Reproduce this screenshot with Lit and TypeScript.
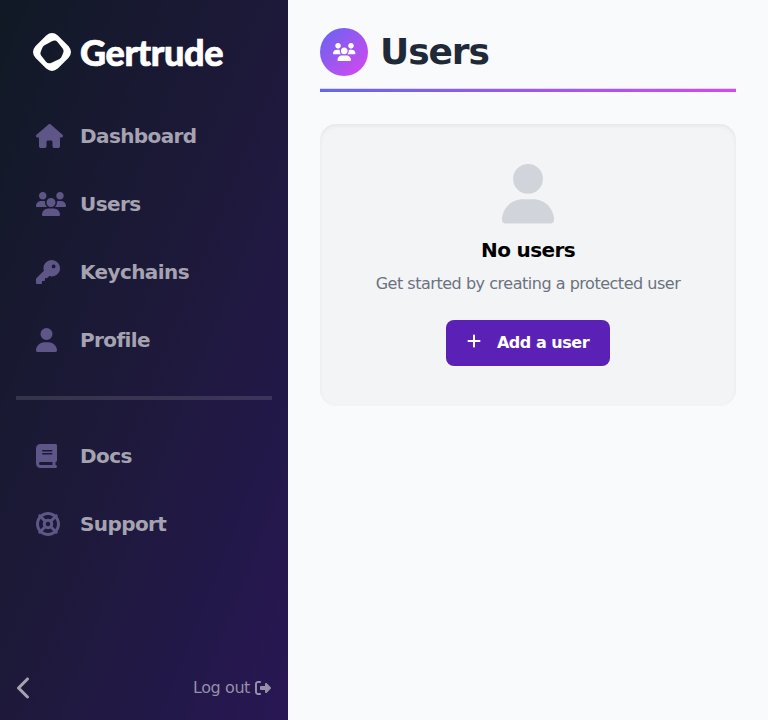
import { LitElement, html, css, svg } from "lit";
import { customElement, property } from "lit/decorators.js";

type Glyph = { w: number; d: string };

const ICONS: Record<string, Glyph> = {
  house: {
    w: 576,
    d: "M575.8 255.5c0 18-15 32.1-32 32.1h-32l.7 160.2c0 2.7-.2 5.4-.5 8.1V472c0 22.1-17.9 40-40 40H456c-1.1 0-2.2 0-3.3-.1c-1.4 .1-2.8 .1-4.2 .1H416 392c-22.1 0-40-17.9-40-40V448 384c0-17.7-14.3-32-32-32H256c-17.7 0-32 14.3-32 32v64 24c0 22.1-17.9 40-40 40H160 128.1c-1.5 0-3-.1-4.5-.2c-1.2 .1-2.4 .2-3.6 .2H104c-22.1 0-40-17.9-40-40V360c0-.9 0-1.9 .1-2.8V287.6H32c-18 0-32-14-32-32.1c0-9 3-17 10-24L266.4 8c7-7 15-8 22-8s15 2 21 7L564.8 231.5c8 7 12 15 11 24z",
  },
  users: {
    w: 640,
    d: "M144 160c-44.2 0-80-35.8-80-80S99.8 0 144 0s80 35.8 80 80s-35.8 80-80 80zm368 0c-44.2 0-80-35.8-80-80s35.8-80 80-80s80 35.8 80 80s-35.8 80-80 80zM0 298.7C0 239.8 47.8 192 106.7 192h42.7c15.9 0 31 3.5 44.6 9.7c-1.3 7.2-1.9 14.7-1.9 22.3c0 38.2 16.8 72.5 43.3 96c-.2 0-.4 0-.7 0H21.3C9.6 320 0 310.4 0 298.7zM405.3 320c-.2 0-.4 0-.7 0c26.6-23.5 43.3-57.8 43.3-96c0-7.6-.7-15-1.9-22.3c13.6-6.3 28.7-9.7 44.6-9.7h42.7C592.2 192 640 239.8 640 298.7c0 11.8-9.6 21.3-21.3 21.3H405.3zM416 224c0 53-43 96-96 96s-96-43-96-96s43-96 96-96s96 43 96 96zM128 485.3C128 411.7 187.7 352 261.3 352H378.7C452.3 352 512 411.7 512 485.3c0 14.7-11.9 26.7-26.7 26.7H154.7c-14.7 0-26.7-11.9-26.7-26.7z",
  },
  key: {
    w: 512,
    d: "M336 352c97.2 0 176-78.8 176-176S433.2 0 336 0S160 78.8 160 176c0 18.7 2.9 36.8 8.3 53.7L7 391c-4.5 4.5-7 10.6-7 17v80c0 13.3 10.7 24 24 24h80c13.3 0 24-10.7 24-24V448h40c13.3 0 24-10.7 24-24V384h40c6.4 0 12.5-2.5 17-7l33.3-33.3c16.9 5.4 35 8.3 53.7 8.3zM376 96a40 40 0 1 1 0 80 40 40 0 1 1 0-80z",
  },
  user: {
    w: 448,
    d: "M224 256A128 128 0 1 0 224 0a128 128 0 1 0 0 256zm-45.7 48C79.8 304 0 383.8 0 482.3C0 498.7 13.3 512 29.7 512H418.3c16.4 0 29.7-13.3 29.7-29.7C448 383.8 368.2 304 269.7 304H178.3z",
  },
  book: {
    w: 448,
    d: "M96 0C43 0 0 43 0 96V416c0 53 43 96 96 96H384h32c17.7 0 32-14.3 32-32s-14.3-32-32-32V384c17.7 0 32-14.3 32-32V32c0-17.7-14.3-32-32-32H384 96zm0 384H352v64H96c-17.7 0-32-14.3-32-32s14.3-32 32-32zm32-240c0-8.8 7.2-16 16-16H336c8.8 0 16 7.2 16 16s-7.2 16-16 16H144c-8.8 0-16-7.2-16-16zm16 48H336c8.8 0 16 7.2 16 16s-7.2 16-16 16H144c-8.8 0-16-7.2-16-16s7.2-16 16-16z",
  },
  ring: {
    w: 512,
    d: "M367.2 412.5C335.9 434.9 297.5 448 256 448s-79.9-13.1-111.2-35.5l58-58c15.8 8.6 34 13.5 53.3 13.5s37.4-4.9 53.3-13.5l57.8 58zm90.7 .8c33.8-43.4 54-98 54-157.3s-20.2-113.9-54-157.3c9-12.5 7.9-30.1-3.4-41.3S425.8 45 413.3 54C369.9 20.2 315.3 0 256 0S142.1 20.2 98.7 54c-12.5-9-30.1-7.9-41.3 3.4S45 86.2 54 98.7C20.2 142.1 0 196.7 0 256s20.2 113.9 54 157.3c-9 12.5-7.9 30.1 3.4 41.3S86.2 467 98.7 458c43.4 33.8 98 54 157.3 54s113.9-20.2 157.3-54c12.5 9 30.1 7.9 41.3-3.4s12.4-28.8 3.4-41.3zm-45.5-46.1l-57.8-57.8c8.6-15.8 13.5-34 13.5-53.3s-4.9-37.4-13.5-53.3l57.8-57.8C434.9 176.1 448 214.5 448 256s-13.1 79.9-35.5 111.2zM367.2 99.5l-57.8 57.8c-15.8-8.6-34-13.5-53.3-13.5s-37.4 4.9-53.3 13.5L144.8 99.5C176.1 77.1 214.5 64 256 64s79.9 13.1 111.2 35.5zM157.3 309.3l-57.8 57.8C77.1 335.9 64 297.5 64 256s13.1-79.9 35.5-111.2l57.8 57.8c-8.6 15.8-13.5 34-13.5 53.3s4.9 37.4 13.5 53.3zM208 256a48 48 0 1 1 96 0 48 48 0 1 1 -96 0z",
  },
  exit: {
    w: 512,
    d: "M377.9 105.9L500.7 228.7c7.2 7.2 11.3 17.1 11.3 27.3s-4.1 20.1-11.3 27.3L377.9 406.1c-6.4 6.4-15 9.9-24 9.9c-18.7 0-33.9-15.2-33.9-33.9l0-62.1-128 0c-17.7 0-32-14.3-32-32l0-64c0-17.7 14.3-32 32-32l128 0 0-62.1c0-18.7 15.2-33.9 33.9-33.9c9 0 17.6 3.6 24 9.9zM160 96L96 96c-17.7 0-32 14.3-32 32l0 256c0 17.7 14.3 32 32 32l64 0c17.7 0 32 14.3 32 32s-14.3 32-32 32l-64 0c-53 0-96-43-96-96L0 128C0 75 43 32 96 32l64 0c17.7 0 32 14.3 32 32s-14.3 32-32 32z",
  },
  chevron: {
    w: 320,
    d: "M9.4 233.4c-12.5 12.5-12.5 32.8 0 45.3l192 192c12.5 12.5 32.8 12.5 45.3 0s12.5-32.8 0-45.3L77.3 256 246.6 86.6c12.5-12.5 12.5-32.8 0-45.3s-32.8-12.5-45.3 0l-192 192z",
  },
  plus: {
    w: 448,
    d: "M256 80c0-17.7-14.3-32-32-32s-32 14.3-32 32V224H48c-17.7 0-32 14.3-32 32s14.3 32 32 32H192V432c0 17.7 14.3 32 32 32s32-14.3 32-32V288H400c17.7 0 32-14.3 32-32s-14.3-32-32-32H256V80z",
  },
};

/** Solid glyph that is one em tall and as wide as its own view box. */
@customElement("ui-icon")
export class UiIcon extends LitElement {
  @property() name = "user";

  static styles = css`
    :host {
      display: block;
      flex: none;
      line-height: 0;
    }
    .glyph {
      display: block;
      height: 1em;
      fill: currentColor;
      overflow: visible;
    }
  `;

  render() {
    const icon = ICONS[this.name];
    return html`<svg class="glyph" viewBox="0 0 ${icon.w} 512" aria-hidden="true">
      ${svg`<path d=${icon.d}></path>`}
    </svg>`;
  }
}

const MAIN_LINKS = [
  { icon: "house", label: "Dashboard" },
  { icon: "users", label: "Users" },
  { icon: "key", label: "Keychains" },
  { icon: "user", label: "Profile" },
];

const HELP_LINKS = [
  { icon: "book", label: "Docs" },
  { icon: "ring", label: "Support" },
];

@customElement("side-bar")
export class SideBar extends LitElement {
  static styles = css`
    :host {
      display: flex;
      flex-direction: column;
      box-sizing: border-box;
      width: 288px;
      height: 100%;
      background: linear-gradient(to bottom right, #101924, #17192f 22%, #1e193b 52%, #23184a 80%, #291754);
    }
    .brand {
      display: flex;
      align-items: center;
      gap: 9px;
      height: 40px;
      padding: 32px 33px 0;
      color: #fff;
    }
    .mark {
      width: 38px;
      height: 38px;
      flex: none;
    }
    .word {
      font: 900 36px/40px Lato, sans-serif;
      letter-spacing: -0.38px;
      -webkit-text-stroke: 0.7px currentColor;
    }
    .links {
      display: flex;
      flex-direction: column;
      gap: 12px;
      padding: 0 16px;
    }
    .main {
      margin-top: 36px;
    }
    .link {
      display: flex;
      align-items: center;
      height: 56px;
      padding-left: 20px;
      font-size: 20px;
      font-weight: 700;
      letter-spacing: -0.6px;
      color: #a5a3b1;
    }
    .slot {
      width: 44px;
      font-size: 24px;
      color: #5e5687;
    }
    .rule {
      height: 4px;
      margin: 28px 16px;
      background: rgba(255, 255, 255, 0.12);
    }
    .foot {
      display: flex;
      align-items: center;
      justify-content: space-between;
      margin-top: auto;
      height: 64px;
      padding: 0 17px;
      color: #958fa8;
    }
    .back {
      font-size: 24px;
      color: #a5a3b1;
    }
    .logout {
      display: flex;
      align-items: center;
      gap: 5px;
      font-size: 16px;
      line-height: 20px;
      letter-spacing: -0.4px;
    }
  `;

  private link(item: { icon: string; label: string }) {
    return html`<a class="link"><span class="slot"><ui-icon name=${item.icon}></ui-icon></span>${item.label}</a>`;
  }

  render() {
    return html`
      <div class="brand">
        <svg class="mark" viewBox="0 0 38 38" aria-hidden="true">
          <path
            fill="currentColor"
            fill-rule="evenodd"
            d="M13.2 2.4Q19 -2.400 24.800 2.400L35.600 13.200Q40.400 19 35.600 24.800L24.800 35.600Q19 40.400 13.200 35.600L2.400 24.800Q-2.400 19 2.400 13.200ZM19.500 8L11.500 12.200Q9.800 13.300 9 15.500L7.700 19Q7 21 8.300 22.800L13 28.700Q15 31 18 29.900L26.500 26Q28.200 25 29 22.800L30.300 19.500Q31 17.300 29.700 15.500L24.500 9Q22.500 6.700 19.500 8Z"
          ></path>
        </svg>
        <span class="word">Gertrude</span>
      </div>
      <nav class="links main">${MAIN_LINKS.map((l) => this.link(l))}</nav>
      <div class="rule"></div>
      <nav class="links">${HELP_LINKS.map((l) => this.link(l))}</nav>
      <div class="foot">
        <ui-icon class="back" name="chevron"></ui-icon>
        <span class="logout">Log out<ui-icon name="exit"></ui-icon></span>
      </div>
    `;
  }
}

@customElement("empty-state")
export class EmptyState extends LitElement {
  static styles = css`
    :host {
      display: flex;
      flex-direction: column;
      align-items: center;
      box-sizing: border-box;
      height: 282px;
      padding-top: 40px;
      border-radius: 16px;
      background: #f3f4f6;
      box-shadow: inset 0 2px 4px rgba(0, 0, 0, 0.06);
    }
    .figure {
      height: 60px;
      font-size: 59.5px;
      color: #d1d5db;
    }
    .title {
      margin: 12px 0 0;
      font-size: 20px;
      line-height: 28px;
      font-weight: 700;
      letter-spacing: -0.62px;
      color: #000;
    }
    .text {
      margin: 8px 0 0;
      line-height: 24px;
      letter-spacing: -0.475px;
      color: #6b7280;
    }
    .add {
      display: flex;
      align-items: center;
      gap: 16px;
      box-sizing: border-box;
      height: 46px;
      margin-top: 24px;
      padding: 0 21px 1px;
      border: 0;
      border-radius: 8px;
      background: #5b21b6;
      color: #fff;
      font: inherit;
      font-weight: 700;
      line-height: 19px;
      letter-spacing: -0.48px;
    }
    .plus {
      margin-top: -3px;
    }
  `;

  render() {
    return html`
      <ui-icon class="figure" name="user"></ui-icon>
      <h2 class="title">No users</h2>
      <p class="text">Get started by creating a protected user</p>
      <button class="add"><ui-icon class="plus" name="plus"></ui-icon>Add a user</button>
    `;
  }
}

@customElement("app-root")
export class AppRoot extends LitElement {
  static styles = css`
    :host {
      display: grid;
      grid-template-columns: 288px 1fr;
      height: 100vh;
      overflow: hidden;
      background: #f9fafc;
      font-family: "DejaVu Sans", sans-serif;
      font-size: 16px;
    }
    .page {
      padding: 28px 32px;
    }
    .head {
      display: flex;
      align-items: center;
      gap: 12px;
      height: 48px;
    }
    .badge {
      display: flex;
      align-items: center;
      justify-content: center;
      width: 48px;
      height: 48px;
      border-radius: 50%;
      background: linear-gradient(to bottom right, #6366f1, #d946ef);
      color: #fff;
      font-size: 18px;
    }
    .title {
      margin: 0;
      font-size: 36px;
      line-height: 40px;
      font-weight: 700;
      letter-spacing: -1.1px;
      color: #1f2937;
    }
    .line {
      height: 3px;
      margin: 12px 0 32px;
      border-top: 1px solid #d9dbe0;
      background: linear-gradient(to right, #6366f1, #d946ef);
    }
  `;

  render() {
    return html`
      <side-bar></side-bar>
      <main class="page">
        <header class="head">
          <span class="badge"><ui-icon name="users"></ui-icon></span>
          <h1 class="title">Users</h1>
        </header>
        <div class="line"></div>
        <empty-state></empty-state>
      </main>
    `;
  }
}
